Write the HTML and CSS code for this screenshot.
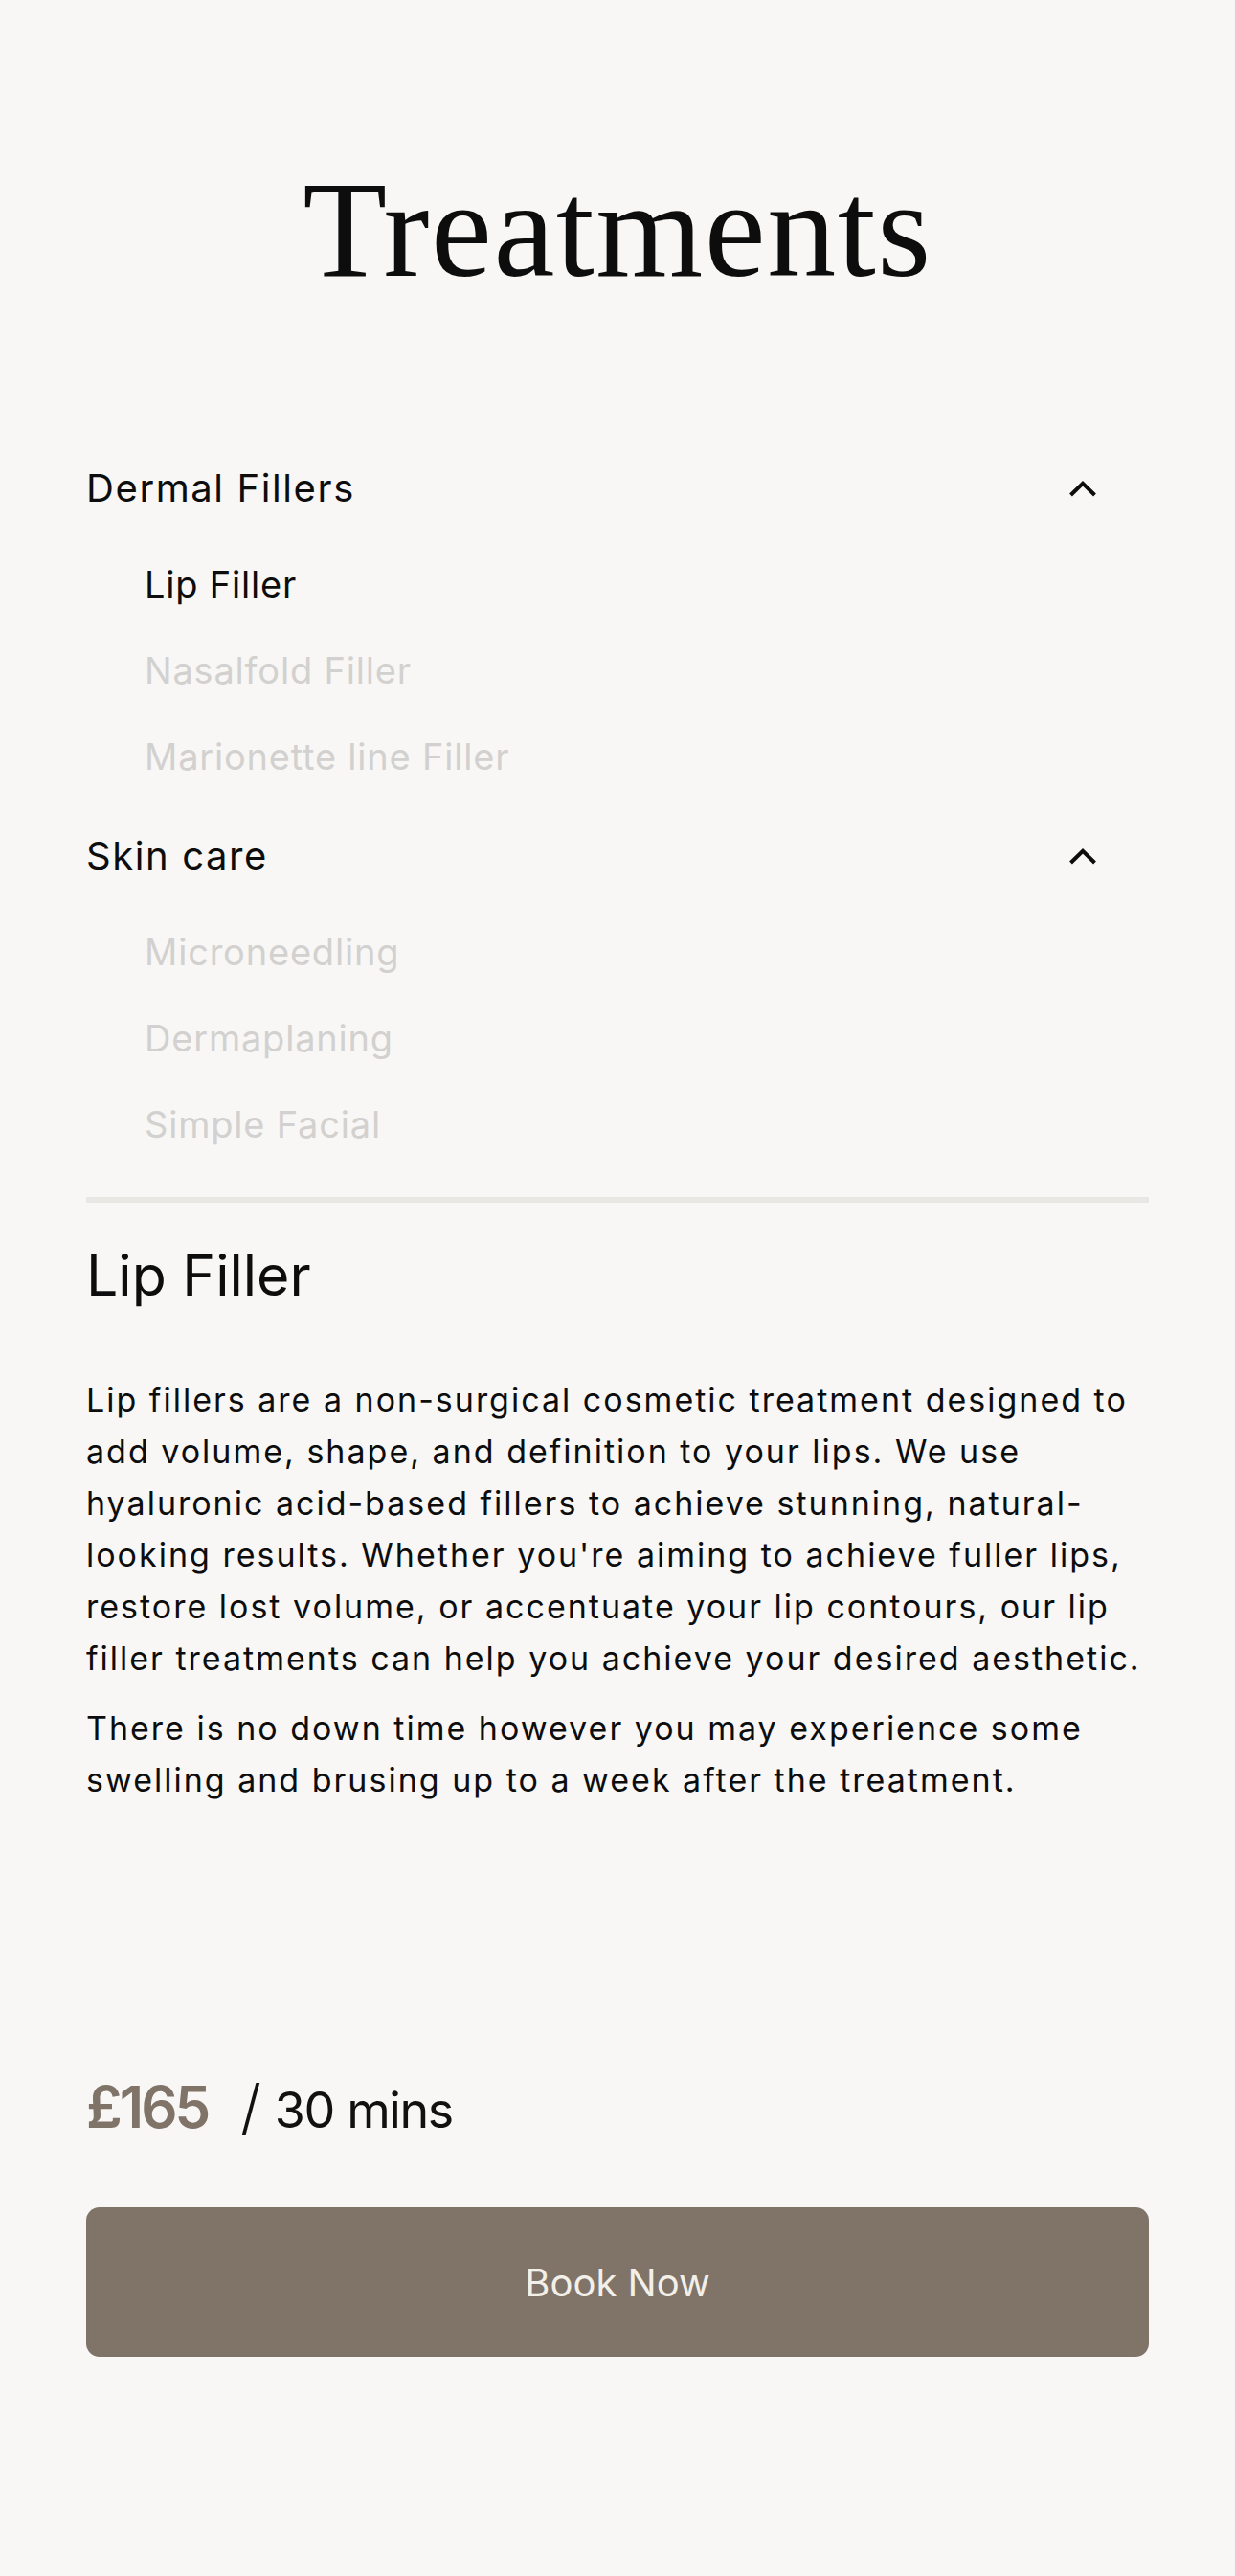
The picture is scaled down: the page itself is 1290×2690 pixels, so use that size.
FILE: index.html
```html
<!DOCTYPE html>
<html lang="en">
<head>
<meta charset="utf-8">
<title>Treatments</title>
<link rel="stylesheet" href="styles.css">
</head>
<body>
<main class="page">
  <h1 class="title">Treatments</h1>

  <section class="accordion">
    <div class="group">
      <div class="group-head">
        <span class="group-name">Dermal Fillers</span>
        <svg class="chevron" width="30" height="17" viewBox="0 0 30 17" aria-hidden="true"><polyline points="2.5,15 15,2.8 27.5,15" fill="none" stroke="#0d0d0d" stroke-width="4" stroke-linejoin="miter"/></svg>
      </div>
      <ul class="items">
        <li class="item active">Lip Filler</li>
        <li class="item">Nasalfold Filler</li>
        <li class="item">Marionette line Filler</li>
      </ul>
    </div>
    <div class="group">
      <div class="group-head">
        <span class="group-name">Skin care</span>
        <svg class="chevron" width="30" height="17" viewBox="0 0 30 17" aria-hidden="true"><polyline points="2.5,15 15,2.8 27.5,15" fill="none" stroke="#0d0d0d" stroke-width="4" stroke-linejoin="miter"/></svg>
      </div>
      <ul class="items">
        <li class="item">Microneedling</li>
        <li class="item">Dermaplaning</li>
        <li class="item">Simple Facial</li>
      </ul>
    </div>
  </section>

  <div class="divider"></div>

  <article class="detail">
    <h2 class="detail-title">Lip Filler</h2>
    <p class="detail-text">Lip fillers are a non-surgical cosmetic treatment designed to add volume, shape, and definition to your lips. We use hyaluronic acid-based fillers to achieve stunning, natural-looking results. Whether you're aiming to achieve fuller lips, restore lost volume, or accentuate your lip contours, our lip filler treatments can help you achieve your desired aesthetic.</p>
    <p class="detail-text second">There is no down time however you may experience some swelling and brusing up to a week after the treatment.</p>
  </article>

  <div class="price-row">
    <span class="price">£165</span>
    <span class="slash">/</span>
    <span class="duration">30 mins</span>
  </div>

  <button class="book" type="button">Book Now</button>
</main>
</body>
</html>
```

FILE: styles.css
```css
html, body {
  margin: 0;
  padding: 0;
  background: #f8f7f5;
}

body {
  font-family: "Inter", "Noto Sans", sans-serif;
  color: #0d0d0d;
}

.page {
  box-sizing: border-box;
  width: 1290px;
  min-height: 2690px;
  padding: 168px 90px 0;
  display: flex;
  flex-direction: column;
}

.title {
  margin: 0;
  font-family: "Liberation Serif", "Times New Roman", serif;
  font-weight: 400;
  font-size: 144px;
  line-height: 144px;
  letter-spacing: 1.5px;
  text-align: center;
  color: #0d0d0d;
}

.accordion {
  margin-top: 168px;
  display: flex;
  flex-direction: column;
}

.group {
  padding-bottom: 29px;
}

.group-head {
  height: 60px;
  display: flex;
  align-items: center;
  justify-content: space-between;
  padding-right: 54px;
}

.group-name {
  font-size: 40px;
  line-height: 60px;
  font-weight: 400;
  letter-spacing: 1.6px;
}

.chevron {
  display: block;
}

.items {
  list-style: none;
  margin: 0;
  padding: 25px 0 0 61px;
}

.item {
  font-size: 38px;
  line-height: 90px;
  height: 90px;
  color: #d2d1cf;
  letter-spacing: 0.8px;
}

.item.active {
  color: #0d0d0d;
}

.divider {
  margin-top: 2px;
  height: 6px;
  background: #e9e7e3;
}

.detail {
  display: flex;
  flex-direction: column;
}

.detail-title {
  margin: 40px 0 0;
  font-size: 59px;
  line-height: 71px;
  font-weight: 400;
  letter-spacing: 0;
}

.detail-text {
  margin: 68px 0 0;
  font-size: 34px;
  line-height: 54px;
  letter-spacing: 2px;
}

.detail-text.second {
  margin-top: 19px;
}

.price-row {
  margin-top: 274px;
  display: flex;
  align-items: baseline;
}

.price {
  font-size: 60px;
  line-height: 80px;
  font-weight: 600;
  color: #807368;
  letter-spacing: -3px;
}

.slash {
  font-size: 62px;
  line-height: 80px;
  font-weight: 300;
  margin: 0 14px 0 34px;
  color: #111;
}

.duration {
  font-size: 52px;
  line-height: 80px;
  font-weight: 400;
  letter-spacing: -1.4px;
  color: #111;
}

.book {
  margin-top: 61px;
  height: 156px;
  width: 100%;
  border: 0;
  border-radius: 14px;
  background: #807368;
  color: #f3efe9;
  font-family: "Inter", "Noto Sans", sans-serif;
  font-size: 40px;
  font-weight: 400;
  cursor: pointer;
}
```
